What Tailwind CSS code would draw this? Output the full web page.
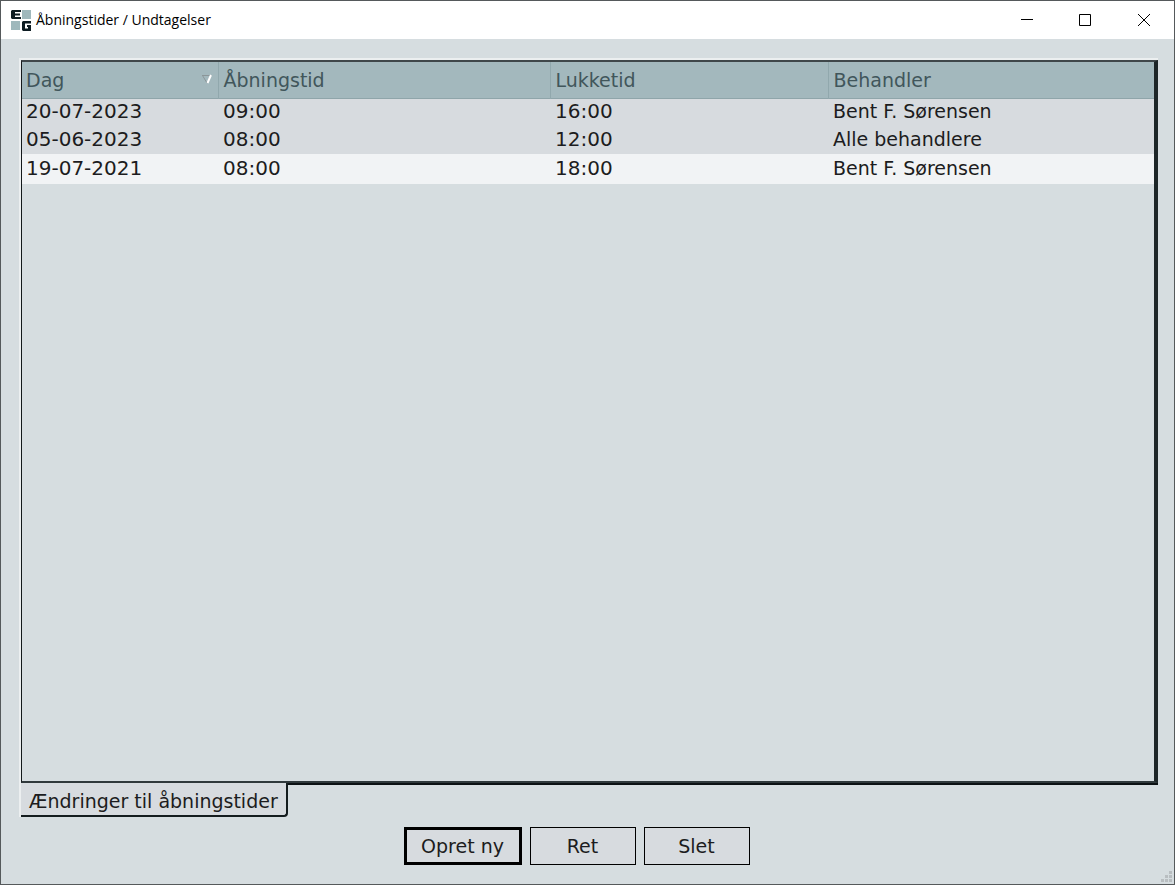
<!DOCTYPE html>
<html lang="da">
<head>
<meta charset="utf-8">
<meta name="viewport" content="width=device-width, initial-scale=1">
<title>Åbningstider / Undtagelser</title>
<script src="https://cdn.jsdelivr.net/npm/@tailwindcss/browser@4"></script>
</head>
<body class="flex h-screen flex-col overflow-hidden border border-[#55595b] bg-[#d6dde0] font-['DejaVu_Sans',sans-serif] text-[19px] leading-6 text-[#1c1c20]">
  <header class="flex h-[38px] shrink-0 items-center bg-white pl-[10px] font-['Open_Sans',sans-serif] text-black">
    <svg class="mr-1 size-[21px]" viewBox="0 0 21 21" aria-hidden="true">
      <path fill="#9fb8bc" d="M11 0h9v9h-9zM0 11h9v9H0z"/>
      <path fill="#0d1c22" d="M1 0h9v2H4v1.500h5v2H4V7h6v2H1L0 8V1z"/>
      <path fill="#0d1c22" fill-rule="evenodd" d="M12 11h8v2.500h-6v5h3V17h-1v-2h4v6h-8l-1-1v-8z"/>
    </svg>
    <h1 class="grow text-sm">Åbningstider / Undtagelser</h1>
    <button type="button" aria-label="Minimer" class="flex h-full w-[58px] items-center justify-center"><svg class="size-3" viewBox="0 0 12 12"><path d="M0 5.500h12" stroke="#000"/></svg></button>
    <button type="button" aria-label="Maksimer" class="flex h-full w-[58px] items-center justify-center"><svg class="size-3" viewBox="0 0 12 12"><path d="M.5.5h11v11H.5z" fill="none" stroke="#000"/></svg></button>
    <button type="button" aria-label="Luk" class="flex h-full w-[60px] items-center justify-center"><svg class="size-3" viewBox="0 0 12 12"><path d="M0 0l12 12M12 0L0 12" stroke="#000"/></svg></button>
  </header>

  <main class="flex min-h-0 grow flex-col pt-[19px] pr-4 pl-[18px]">
    <section class="flex min-h-0 grow flex-col border-t-2 border-l-2 border-[#eceff0]">
      <div class="grow border-t-2 border-r-4 border-b-2 border-l border-t-[#3f474a] border-r-[#1d2628] border-b-[#30393c] border-l-[#14191b]">
        <table class="w-full table-fixed border-collapse text-left">
          <colgroup><col class="w-[196px]"><col class="w-[332px]"><col class="w-[278px]"><col></colgroup>
          <thead>
            <tr class="h-9 border-b border-[#8fa5aa] bg-[#a3b8bd] text-[#41565b]">
              <th scope="col" class="border-r border-[#91a8ad] p-0 pl-1 font-normal">
                <span class="flex items-center justify-between pr-1">Dag
                  <svg class="size-3" viewBox="0 0 12 12" aria-hidden="true"><path d="M0 1.500h10M.5 1.500L5 9" stroke="#8b9699" fill="none"/><path d="M9 1L5.500 9" stroke="#fff" stroke-width="2" fill="none"/></svg>
                </span>
              </th>
              <th scope="col" class="border-r border-[#91a8ad] p-0 pl-[5px] font-normal">Åbningstid</th>
              <th scope="col" class="border-r border-[#91a8ad] p-0 pl-[5px] font-normal">Lukketid</th>
              <th scope="col" class="p-0 pl-[5px] font-normal">Behandler</th>
            </tr>
          </thead>
          <tbody class="text-xl leading-6 [&_td]:p-0 [&_td]:pb-[3px] [&_td]:pl-[5px] [&_td:first-child]:pl-1 [&_td:last-child]:text-[19px]">
            <tr class="h-7 bg-[#d7dbdf]"><td>20-07-2023</td><td>09:00</td><td>16:00</td><td>Bent F. Sørensen</td></tr>
            <tr class="h-7 bg-[#d7dbdf]"><td>05-06-2023</td><td>08:00</td><td>12:00</td><td>Alle behandlere</td></tr>
            <tr class="h-[30px] bg-[#f1f3f5]"><td>19-07-2021</td><td>08:00</td><td>18:00</td><td>Bent F. Sørensen</td></tr>
          </tbody>
        </table>
      </div>
      <div class="flex" role="tablist">
        <button type="button" role="tab" aria-selected="true" class="h-[34px] rounded-br border-r-2 border-b-2 border-[#141c1e] bg-[#d7dbdf] px-2 pt-[3px] whitespace-nowrap">Ændringer til åbningstider</button>
        <div class="h-[2px] grow bg-[#0c1214]"></div>
      </div>
    </section>
    <footer class="flex justify-center gap-2 pt-[10px] pr-6 pb-[19px]">
      <button type="button" class="h-[38px] w-[118px] border-3 border-black bg-[#d7dbdf]">Opret ny</button>
      <button type="button" class="h-[38px] w-[106px] border border-black bg-[#d7dbdf]">Ret</button>
      <button type="button" class="h-[38px] w-[106px] border border-black bg-[#d7dbdf]">Slet</button>
    </footer>
  </main>
  <svg class="absolute right-[3px] bottom-[3px] size-[11px]" viewBox="0 0 11 11" aria-hidden="true"><path fill="#b9bec1" d="M8 0h3v3H8zM4 4h3v3H4zM8 4h3v3H8zM0 8h3v3H0zM4 8h3v3H4zM8 8h3v3H8z"/></svg>
</body>
</html>
